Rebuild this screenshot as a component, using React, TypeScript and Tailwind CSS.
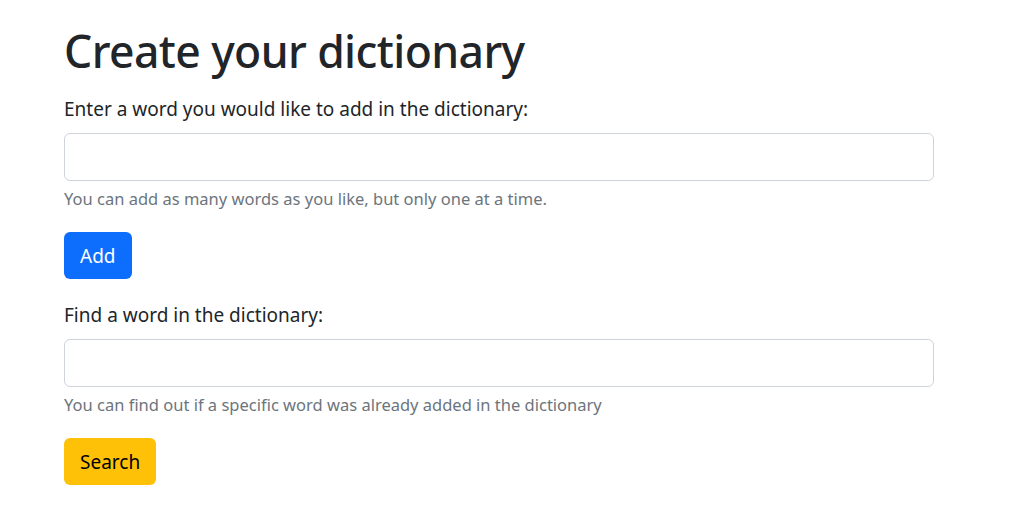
import React from "react";

export default function App() {
  const font = { fontFamily: '"Noto Sans", "Open Sans", sans-serif' };
  return (
    <div className="min-h-[524px] bg-white text-[#212529]" style={font}>
      <div className="w-[870px] ml-[64px] pt-[24px]">
        <h1 className="text-[44.5px] leading-[1.2] font-medium mb-[17px] tracking-[-0.6px]">Create your dictionary</h1>
        <div className="mb-[20px]">
          <label className="block text-[19px] leading-[30px] mb-[9px]">Enter a word you would like to add in the dictionary:</label>
          <input type="text" className="block w-full h-[48px] border border-[#ced4da] rounded-[6px] px-[15px] outline-none" />
          <div className="mt-[5px] text-[16.5px] leading-[26px] text-[#6c757d]">You can add as many words as you like, but only one at a time.</div>
        </div>
        <button className="h-[47px] px-[16px] rounded-[6px] bg-[#0d6efd] text-white text-[19px] leading-[30px]">Add</button>
        <div className="mt-[21px] mb-[20px]">
          <label className="block text-[19px] leading-[30px] mb-[9px]">Find a word in the dictionary:</label>
          <input type="text" className="block w-full h-[48px] border border-[#ced4da] rounded-[6px] px-[15px] outline-none" />
          <div className="mt-[5px] text-[16.5px] leading-[26px] text-[#6c757d]">You can find out if a specific word was already added in the dictionary</div>
        </div>
        <button className="h-[47px] px-[16px] rounded-[6px] bg-[#ffc107] text-black text-[19px] leading-[30px]">Search</button>
      </div>
    </div>
  );
}
